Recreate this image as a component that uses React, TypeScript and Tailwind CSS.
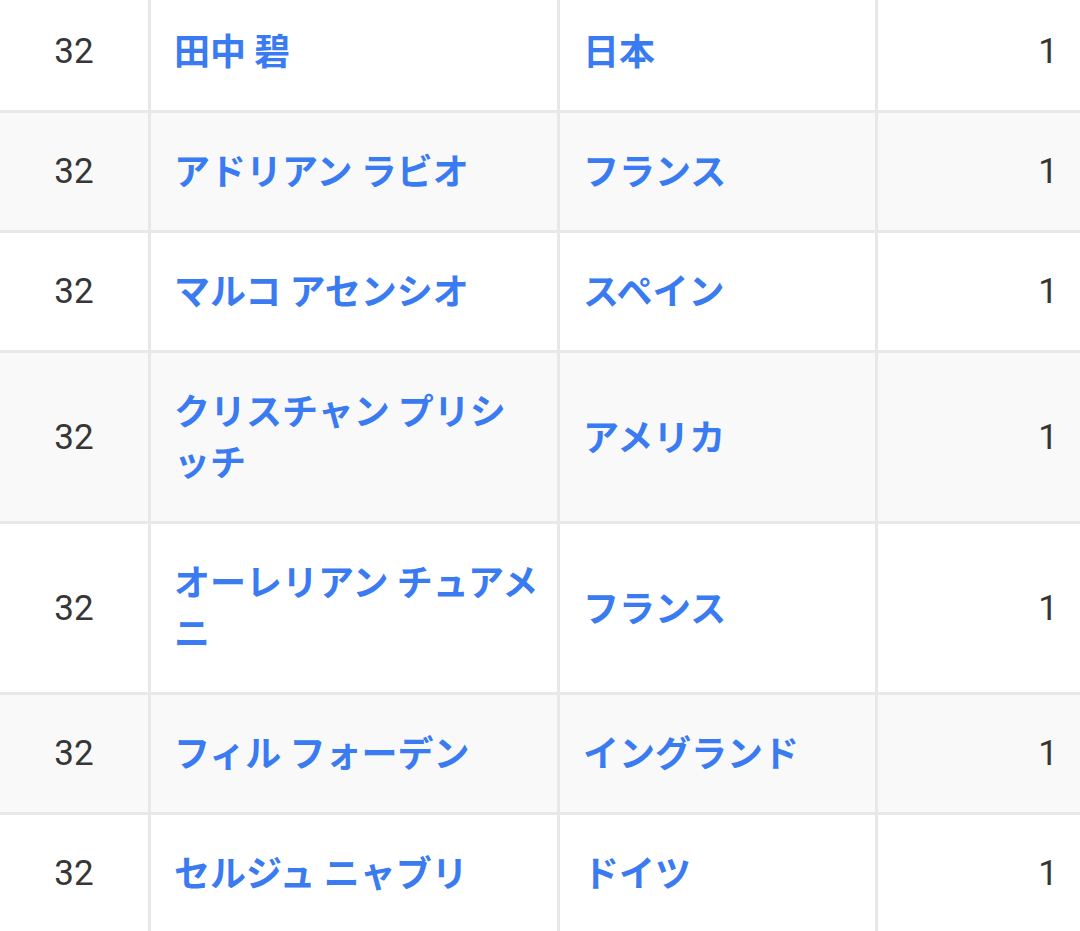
import React from "react";

type Row = { rank: number; name: string; country: string; count: number };

// names carry the line break seen in the table
const rows: Row[] = [
  { rank: 32, name: "田中 碧", country: "日本", count: 1 },
  { rank: 32, name: "アドリアン ラビオ", country: "フランス", count: 1 },
  { rank: 32, name: "マルコ アセンシオ", country: "スペイン", count: 1 },
  { rank: 32, name: "クリスチャン プリシ\nッチ", country: "アメリカ", count: 1 },
  { rank: 32, name: "オーレリアン チュアメニ", country: "フランス", count: 1 },
  { rank: 32, name: "フィル フォーデン", country: "イングランド", count: 1 },
  { rank: 32, name: "セルジュ ニャブリ", country: "ドイツ", count: 1 },
];

const numFont = { fontFamily: "Roboto, 'Noto Sans', sans-serif" };

export default function App() {
  return (
    <div className="h-[931px] w-[1080px] overflow-hidden bg-white">
      <div className="-mt-[7px]">
        {rows.map((r, i) => (
          <div
            key={i}
            className={`grid grid-cols-[151px_409px_318px_1fr] border-b-[3px] border-[#e8e8e8] ${
              i % 2 === 1 ? "bg-[#f9f9f9]" : "bg-white"
            }`}
          >
            {/* rank */}
            <div
              className="flex items-center justify-center border-r-[3px] border-[#e8e8e8] py-[33px] text-[35px] leading-[51px] text-[#363636]"
              style={numFont}
            >
              {r.rank}
            </div>

            {/* player */}
            <div className="flex items-center border-r-[3px] border-[#e8e8e8] pl-[23px] pr-[10px] py-[33px]">
              <a
                href="#"
                className="whitespace-pre-line text-[36px] leading-[51px] font-bold text-[#3a7bf2] font-['Noto_Sans_CJK_JP',sans-serif] -translate-y-[2px]"
              >
                {r.name}
              </a>
            </div>

            {/* country */}
            <div className="flex items-center border-r-[3px] border-[#e8e8e8] px-[23px] py-[33px]">
              <a
                href="#"
                className="text-[36px] leading-[51px] font-bold text-[#3a7bf2] font-['Noto_Sans_CJK_JP',sans-serif] -translate-y-[2px]"
              >
                {r.country}
              </a>
            </div>

            {/* goals */}
            <div
              className="flex items-center justify-end pr-[22px] py-[33px] text-[35px] leading-[51px] text-[#363636]"
              style={numFont}
            >
              {r.count}
            </div>
          </div>
        ))}
      </div>
    </div>
  );
}
